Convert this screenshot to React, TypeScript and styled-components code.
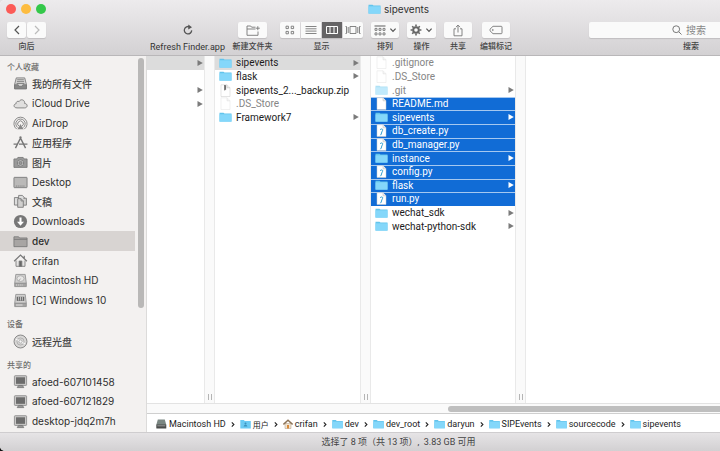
import React from "react";
import styled, { createGlobalStyle, css } from "styled-components";

const GlobalStyle = createGlobalStyle`
  * { box-sizing: border-box; }
  body {
    margin: 0;
    overflow: hidden;
    background: linear-gradient(#e4e2e4 50%, #111 50%);
    font-family: Inter, "Noto Sans CJK SC", sans-serif;
    color: #333;
  }
  button, input { font: inherit; color: inherit; margin: 0; padding: 0; border: 0; background: none; }
  svg { display: block; flex: none; }
`;

const compactFont = css`
  font-family: Roboto, "Noto Sans CJK SC", sans-serif;
`;

const Window = styled.div`
  display: flex;
  flex-direction: column;
  min-width: 797px;
  height: 100vh;
  overflow: hidden;
  border-radius: 5px;
  background: #fff;
`;

/* ---------- title and toolbar ---------- */

const Header = styled.header`
  position: relative;
  flex: none;
  height: 56px;
  border-bottom: 1px solid #b9b7b9;
  background: linear-gradient(#edebed, #d3d1d3);
`;

const Lights = styled.div`
  position: absolute;
  left: 6px;
  top: 4px;
  display: flex;
  gap: 5px;
`;

const Light = styled.button<{ $color: string }>`
  width: 10px;
  height: 10px;
  border-radius: 50%;
  background: ${(p) => p.$color};
`;

const Title = styled.h1`
  display: flex;
  align-items: center;
  justify-content: center;
  gap: 3px;
  height: 18px;
  margin: 0 0 4px;
  font-size: 10px;
  font-weight: 400;
`;

const Toolbar = styled.div`
  display: flex;
  padding: 0 4px 0 7px;
`;

const Tool = styled.div<{ $width: number; $before?: number; $grow?: boolean }>`
  display: flex;
  flex-direction: column;
  align-items: center;
  flex: ${(p) => (p.$grow ? 1 : 0)} 0 ${(p) => p.$width}px;
  min-width: 0;
  margin-left: ${(p) => p.$before ?? 0}px;
`;

const ToolLabel = styled.span<{ $latin?: boolean }>`
  ${compactFont}
  margin-top: 2px;
  line-height: 14px;
  font-size: ${(p) => (p.$latin ? 9 : 8)}px;
  font-weight: ${(p) => (p.$latin ? 400 : 500)};
  color: ${(p) => (p.$latin ? "#333" : "#444")};
  white-space: nowrap;
`;

const Controls = styled.div`
  display: flex;
  width: 100%;
  gap: 1px;
`;

const ToolButton = styled.button<{ $plain?: boolean; $active?: boolean }>`
  display: flex;
  align-items: center;
  justify-content: center;
  gap: 3px;
  flex: 1;
  min-width: 0;
  height: 16px;
  border-radius: 2px;
  color: #666;
  ${(p) =>
    !p.$plain &&
    css`
      background: ${p.$active ? "#666466" : "#fafafa"};
      color: ${p.$active ? "#fff" : "#666"};
      box-shadow: 0 1px 1px #c0bec0;
    `}
`;

const Segments = styled(Controls)`
  ${ToolButton} { border-radius: 0; }
  ${ToolButton}:first-child { border-radius: 2px 0 0 2px; }
  ${ToolButton}:last-child { border-radius: 0 2px 2px 0; }
`;

const SearchBox = styled.label`
  display: flex;
  align-items: center;
  justify-content: center;
  gap: 4px;
  width: 100%;
  height: 16px;
  border-radius: 2px;
  background: #fafafa;
  box-shadow: 0 1px 1px #c0bec0;
  color: #777;
`;

const SearchInput = styled.input`
  width: 24px;
  font-size: 10px;
  outline: 0;
  &::placeholder { color: #888; opacity: 1; }
`;

/* ---------- body ---------- */

const Body = styled.div`
  display: flex;
  flex: 1;
  min-height: 0;
`;

const Sidebar = styled.nav`
  display: flex;
  flex: none;
  width: 147px;
  overflow: hidden;
  border-right: 1px solid #dcdbda;
  background: #f3f1f0;
`;

const SidebarLists = styled.div`
  width: 135px;
`;

const SidebarThumb = styled.div`
  width: 6px;
  height: 250px;
  margin: 2px 0 0 3px;
  border-radius: 3px;
  background: #b9b8b7;
`;

const GroupTitle = styled.h2<{ $gap: number }>`
  margin: ${(p) => p.$gap}px 0 0 7px;
  font-size: 8px;
  line-height: 14px;
  font-weight: 500;
  color: #6e6d6c;
`;

const Places = styled.ul<{ $count: number; $height: number }>`
  display: grid;
  grid-template-rows: repeat(${(p) => p.$count}, 1fr);
  height: ${(p) => p.$height}px;
  margin: 0;
  padding: 0;
  list-style: none;
`;

const Place = styled.a<{ $active?: boolean }>`
  display: flex;
  align-items: center;
  gap: 4px;
  height: 100%;
  padding-left: 13px;
  font-size: 10px;
  font-weight: ${(p) => (p.$active ? 500 : 400)};
  color: #2e2e2e;
  text-decoration: none;
  white-space: nowrap;
  background: ${(p) => (p.$active ? "#d8d4d2" : "transparent")};
  &:lang(zh) { font-weight: 500; color: #444; }
`;

const Main = styled.main`
  display: flex;
  flex-direction: column;
  flex: 1;
  min-width: 0;
`;

const Columns = styled.div`
  display: flex;
  flex: 1;
  min-height: 0;
`;

const Column = styled.ul<{ $width: number }>`
  display: grid;
  grid-template-rows: repeat(13, 1fr);
  flex: none;
  width: ${(p) => p.$width}px;
  height: 177px;
  margin: 0;
  padding: 0;
  list-style: none;
`;

const Preview = styled.div`
  flex: 1;
`;

const Divider = styled.div`
  display: flex;
  align-items: flex-end;
  justify-content: center;
  gap: 2px;
  flex: none;
  width: 11px;
  padding-bottom: 3px;
  border: solid #e9e9e9;
  border-width: 0 1px;
  background: #fafafa;
`;

const Grip = styled.i`
  width: 1px;
  height: 6px;
  background: #b4b4b4;
`;

const FileRow = styled.button<{ $state?: string; $dim?: boolean }>`
  ${compactFont}
  display: flex;
  align-items: center;
  gap: 4px;
  width: 100%;
  height: 100%;
  padding: 0 1px 0 4px;
  font-size: 10px;
  line-height: 12px;
  text-align: left;
  white-space: nowrap;
  color: ${(p) => (p.$state === "selected" ? "#fff" : p.$dim ? "#858585" : "#1c1c1c")};
  background: ${(p) => (p.$state === "selected" ? "#116cd6" : p.$state === "open" ? "#dcdcdc" : "transparent")};
  ${(p) => p.$state === "selected" && "box-shadow: inset 0 1px #a5c8f0;"}
`;

const FileName = styled.span`
  flex: 1;
  padding-top: 1px;
`;

const ArrowTint = styled.span<{ $light?: boolean }>`
  color: ${(p) => (p.$light ? "#fff" : "#7b7b7b")};
`;

const Faded = styled.span<{ $on?: boolean }>`
  flex: none;
  opacity: ${(p) => (p.$on ? 0.5 : 1)};
`;

const ScrollTrack = styled.div`
  flex: none;
  height: 11px;
  padding: 2px 2px 0 301px;
  border: solid #e3e3e3;
  border-width: 1px 0;
  border-bottom-color: #cfcfcf;
  background: #fafafa;
`;

const ScrollThumb = styled.div`
  height: 6px;
  border-radius: 3px;
  background: #bfbfbf;
`;

const PathBar = styled.nav`
  ${compactFont}
  display: flex;
  align-items: center;
  flex: none;
  gap: 5px;
  height: 18px;
  padding: 2px 0 0 9px;
  font-size: 9px;
  white-space: nowrap;
`;

const Crumb = styled.a`
  display: flex;
  align-items: center;
  gap: 2px;
  color: #1c1c1c;
  text-decoration: none;
  &:lang(zh) { font-size: 8px; }
`;

const StatusBar = styled.footer`
  ${compactFont}
  flex: none;
  height: 19px;
  border-top: 1px solid #cfcdcf;
  background: linear-gradient(#e6e4e6, #d2d0d2);
  font-size: 9px;
  line-height: 18px;
  text-align: center;
  color: #444;
`;

/* ---------- drawings ---------- */

const FolderIcon = () => (
  <svg width="13" height="12" viewBox="0 0 13 12">
    <path d="M.5 1.7h4l1 .9h7v8H.5z" fill="#62c4ec" />
    <path d="M.5 3.3h12v7.4H.5z" fill="#84d7fa" />
  </svg>
);

const PageIcon = ({ kind }: { kind: string }) => (
  <svg width="13" height="13" viewBox="0 0 13 13">
    <path d="M2 .8h6l3 3v8.7H2z" fill="#fff" stroke="#c9c9c9" strokeWidth=".5" />
    <path d="M8 .8v3h3" fill="#eee" stroke="#bbb" strokeWidth=".5" />
    {kind === "zip" && <path d="M5.7 1v5.4M6.6 1.2v4.6" stroke="#555" strokeWidth=".9" />}
    {kind === "py" && (
      <path d="M5 5.8c1.8-1.6 3.6-.8 2.2 1.4-.8 1-.4 2.6-1.8 4" fill="none" stroke="#269bd0" strokeWidth="1" />
    )}
  </svg>
);

const FileArrow = () => (
  <svg width="6" height="8" viewBox="0 0 6 8">
    <path d="M.5 1 5.8 4 .5 7z" fill="currentColor" />
  </svg>
);

const CrumbArrow = () => (
  <svg width="4" height="7" viewBox="0 0 4 7">
    <path d="m.8 1.4 2.1 2.1L.8 5.6" fill="none" stroke="#222" strokeWidth="1.1" />
  </svg>
);

const DiskIcon = () => (
  <svg width="11" height="10" viewBox="0 0 11 10">
    <path d="M1.8.5h7L10.3 6H.3z" fill="#7b8783" />
    <rect x=".3" y="5.5" width="10" height="4" rx=".5" fill="#4a4c4b" />
    <path d="M1.3 6.8h8" stroke="#bbb" strokeWidth=".7" />
  </svg>
);

const UsersIcon = () => (
  <svg width="11" height="10" viewBox="0 0 11 10">
    <path d="M.3 1h3.5l1 1h6v7.5H.3z" fill="#6bcaf3" />
    <circle cx="5.5" cy="4.4" r="1" fill="#3c93bd" />
    <path d="M3.7 7.6c.2-2.4 3.4-2.4 3.6 0z" fill="#3c93bd" />
  </svg>
);

const CrumbFolder = () => (
  <svg width="11" height="10" viewBox="0 0 11 10">
    <path d="M.3 1h3.5l1 1h6v7.3H.3z" fill="#62c4ec" />
    <path d="M.3 2.6h10.5v6.7H.3z" fill="#84d7fa" />
  </svg>
);

const CrumbHome = () => (
  <svg width="10" height="10" viewBox="0 0 10 10">
    <path d="M2 4.5h6v5H2z" fill="#f0e3cf" stroke="#b09a80" strokeWidth=".5" />
    <path d="M.4 5.4 5 1.2l4.6 4.2" fill="none" stroke="#8c7357" strokeWidth="1.4" />
    <path d="M4 6h2v3.5H4z" fill="#d98a3a" />
  </svg>
);

const placeDrawings: Record<string, React.ReactNode> = {
  tray: (
    <>
      <path d="M3.5 2h9l1.8 7v4.5H1.7V9z" fill="#d6d5d4" />
      <path d="M4.5 4h7M4.2 6h7.6M3.8 8h8.4" />
      <path d="M1.7 9.3h3.8l1 1.7h3l1-1.7h3.8v4.4H1.7z" fill="#888" />
    </>
  ),
  cloud: <path d="M4.3 12.7C.3 12.7.2 8.6 3.3 8.2c-.2-2.4 2-3.2 3.2-2.2 1.7-3.6 6.6-1.8 5.9 2 3.7.1 3.5 4.7 0 4.7z" fill="#e0dfde" />,
  airdrop: (
    <>
      <path d="M4 14A7 7 0 1 1 12 14M5.2 12.4a5 5 0 1 1 5.6 0M6.3 10.8a3 3 0 1 1 3.4 0" fill="none" />
      <path d="M8 8.6 11.2 14H4.8z" fill="#888" stroke="none" />
    </>
  ),
  apps: (
    <>
      <path d="M8.8 1.8 2.6 14M7.2 1.8 13.4 14" fill="none" strokeWidth="1.5" />
      <path d="M.6 9.8h4.2m1.6 0h9" fill="none" strokeWidth="1.4" />
    </>
  ),
  camera: (
    <>
      <path d="M1 4.2h3.2l1-1.6h5.6l1 1.6H15v9H1z" fill="#999" />
      <circle cx="8" cy="8.5" r="3.4" fill="#ccc" />
      <circle cx="8" cy="8.5" r="1.7" fill="#999" />
    </>
  ),
  desktop: (
    <>
      <rect x="1" y="2.5" width="14" height="11" rx=".6" fill="#bab9b8" />
      <path d="M3 11.8h10" strokeDasharray="1.2 .8" />
    </>
  ),
  docs: (
    <>
      <path d="M1.5 3.8h5v8h-5z" fill="#ddd" />
      <path d="M6 1.5h4L12.2 4v6H6z" fill="#ddd" />
      <path d="M5 5h3.6l2.4 2.4v6.8H5zM8.6 5v2.4H11M11 4.5h3.3v7.4H11" fill="#d0cfce" />
    </>
  ),
  download: (
    <>
      <circle cx="8" cy="8" r="7" fill="#777" stroke="none" />
      <path d="M8 3.8v6" stroke="#fff" strokeWidth="2.2" />
      <path d="M4.3 8.3h7.4L8 12.4z" fill="#fff" stroke="none" />
    </>
  ),
  folder: (
    <>
      <path d="M1 3h5l1 1.2h8v9.3H1z" fill="#a8a5a3" />
      <path d="M1 5.7h14" />
    </>
  ),
  home: (
    <>
      <path d="M3.2 8v6.2h9.6V8" fill="#e5e4e3" />
      <path d="M1.2 8.8 8 2.2l6.8 6.6M12 6V2.8" fill="none" strokeWidth="1.3" />
      <path d="M6.6 8.6h2.8v5.6H6.6z" fill="#666" />
    </>
  ),
  disk: (
    <>
      <path d="M3 1.5h10l1.2 9.5H1.8z" fill="#d0cfce" stroke="#8f8f8f" />
      <ellipse cx="8" cy="6" rx="3.8" ry="3.1" fill="#e8e7e6" stroke="#aaa" />
      <path d="M8 6 6 8.6" stroke="#999" />
      <path d="M1.8 11h12.4v3.5H1.8z" fill="#a5a4a3" stroke="#8f8f8f" />
      <path d="M3.2 12.8h7" strokeDasharray="1 1" stroke="#eee" />
    </>
  ),
  windows: (
    <>
      <path d="M3 1.5h10l1.2 9.5H1.8z" fill="#d0cfce" stroke="#8f8f8f" />
      <path d="M4 4h8v4.4H4z" fill="#666" stroke="none" />
      <path d="M6 4v4m2-4v4m2-4v4" stroke="#ddd" strokeWidth=".8" />
      <path d="M1.8 11h12.4v3.5H1.8z" fill="#a5a4a3" stroke="#8f8f8f" />
      <path d="M3.2 12.8h7" stroke="#eee" />
    </>
  ),
  disc: (
    <>
      <circle cx="8" cy="8" r="6.9" fill="#d8d7d6" />
      <circle cx="8" cy="8" r="3.8" fill="none" stroke="#aaa" />
      <circle cx="8" cy="8" r="1.7" fill="#f5f5f5" stroke="#aaa" />
      <path d="M3 5.5 6.5 7M9.5 9l3.5 1.5" stroke="#fff" />
    </>
  ),
  computer: (
    <>
      <rect x="1.5" y="1.8" width="13" height="10.4" rx=".8" fill="#c9c8c7" stroke="#8a8a8a" />
      <path d="M3.2 3.5h9.6v7H3.2z" fill="#6c6c6c" stroke="none" />
      <path d="M6 12.2h4l1.5 2.3h-7z" fill="#999" />
    </>
  ),
};

const PlaceIcon = ({ name }: { name: string }) => (
  <svg width="15" height="15" viewBox="0 0 16 16" stroke="#777" strokeWidth=".9">
    {placeDrawings[name]}
  </svg>
);

const Chevron = ({ dir, color = "#555" }: { dir: "left" | "right" | "down"; color?: string }) => (
  <svg width="8" height="10" viewBox="0 0 8 10" fill="none" stroke={color} strokeWidth="1.2">
    <path d={{ left: "M6 1 2 5l4 4", right: "m2 1 4 4-4 4", down: "m1.4 3.6 2.6 2.8 2.6-2.8" }[dir]} />
  </svg>
);

const RefreshIcon = () => (
  <svg width="10" height="12" viewBox="0 0 10 12">
    <path d="M8.7 6.4a3.7 3.7 0 1 1-2.1-3.5" fill="none" stroke="#555" strokeWidth="1.3" />
    <path d="M5.3.4 9 3.2 5.2 5.4z" fill="#555" />
  </svg>
);

const NewFolderIcon = () => (
  <svg width="14" height="11" viewBox="0 0 14 11" fill="none" stroke="#777" strokeWidth=".9">
    <path d="M12 6.5v3.8H1V1h3.7l.9 1.2h3.9M1 4h8.5M11.8 1.2v4M9.8 3.2h4" />
  </svg>
);

const GridIcon = () => (
  <svg width="10" height="10" viewBox="0 0 10 10" fill="none" stroke="#777" strokeWidth=".9">
    <path d="M1 1.2h2.4v2.4H1zM6.2 1.2h2.4v2.4H6.2zM1 6.4h2.4v2.4H1zM6.2 6.4h2.4v2.4H6.2z" />
  </svg>
);

const ListIcon = () => (
  <svg width="12" height="10" viewBox="0 0 12 10">
    <path d="M.5 1.5h11m-11 2.3h11m-11 2.3h11m-11 2.4h11" stroke="#777" strokeWidth=".9" />
  </svg>
);

const ColumnsIcon = () => (
  <svg width="14" height="10" viewBox="0 0 14 10" fill="none" stroke="#fff">
    <path d="M1.5 1.5h11v7h-11zM5 1.5v7M9 1.5v7" />
  </svg>
);

const FlowIcon = () => (
  <svg width="16" height="10" viewBox="0 0 16 10" fill="none" stroke="#777" strokeWidth=".9">
    <path d="M5 1.5h6v7H5zM3.2 2v6M12.8 2v6M.5 1.5h1v7h-1M15.5 1.5h-1v7h1" />
  </svg>
);

const ArrangeIcon = () => (
  <svg width="12" height="11" viewBox="0 0 12 11" fill="none" stroke="#777" strokeWidth=".9">
    <path d="M.5 1h11" strokeWidth="1.2" />
    <path d="M1 3.4h2v2H1zM5 3.4h2v2H5zM9 3.4h2v2H9zM1 7.9h2v2H1zM5 7.9h2v2H5zM9 7.9h2v2H9z" />
  </svg>
);

const GearIcon = () => (
  <svg width="12" height="12" viewBox="0 0 12 12" fill="none" stroke="#666">
    <circle cx="6" cy="6" r="2.8" strokeWidth="2" />
    <path d="M6 .6v2M6 9.4v2M.6 6h2M9.4 6h2M2.2 2.2l1.3 1.3M8.5 8.5l1.3 1.3M9.8 2.2 8.5 3.5M3.5 8.5 2.2 9.8" strokeWidth="1.6" />
  </svg>
);

const ShareIcon = () => (
  <svg width="10" height="13" viewBox="0 0 10 13" fill="none" stroke="#777" strokeWidth=".9">
    <path d="M3 4.8H1v7h8v-7H7M5 8.5V1.2M2.9 3.2 5 1.1l2.1 2.1" />
  </svg>
);

const TagIcon = () => (
  <svg width="14" height="10" viewBox="0 0 14 10" fill="none" stroke="#777" strokeWidth=".9">
    <path d="M4 1.3h8.2q.8 0 .8.8v5.8q0 .8-.8.8H4L1 5.8V4.2z" />
    <circle cx="3.8" cy="5" r=".5" />
  </svg>
);

const SearchIcon = () => (
  <svg width="10" height="10" viewBox="0 0 10 10" fill="none" stroke="#777">
    <circle cx="4.2" cy="4.2" r="3.4" />
    <path d="m6.7 6.7 2.8 2.8" />
  </svg>
);

/* ---------- data ---------- */

type Entry = { name: string; icon: "folder" | "page" | "zip" | "py"; state?: "open" | "selected"; dim?: boolean };

const favourites = [
  ["tray", "我的所有文件", "zh"],
  ["cloud", "iCloud Drive"],
  ["airdrop", "AirDrop"],
  ["apps", "应用程序", "zh"],
  ["camera", "图片", "zh"],
  ["desktop", "Desktop"],
  ["docs", "文稿", "zh"],
  ["download", "Downloads"],
  ["folder", "dev"],
  ["home", "crifan"],
  ["disk", "Macintosh HD"],
  ["windows", "[C] Windows 10"],
];
const devices = [["disc", "远程光盘", "zh"]];
const shared = [
  ["computer", "afoed-607101458"],
  ["computer", "afoed-607121829"],
  ["computer", "desktop-jdq2m7h"],
];

const projects: Entry[] = [
  { name: "sipevents", icon: "folder", state: "open" },
  { name: "flask", icon: "folder" },
  { name: "sipevents_2..._backup.zip", icon: "zip" },
  { name: ".DS_Store", icon: "page", dim: true },
  { name: "Framework7", icon: "folder" },
];

const files: Entry[] = [
  { name: ".gitignore", icon: "page", dim: true },
  { name: ".DS_Store", icon: "page", dim: true },
  { name: ".git", icon: "folder", dim: true },
  { name: "README.md", icon: "page", state: "selected" },
  { name: "sipevents", icon: "folder", state: "selected" },
  { name: "db_create.py", icon: "py", state: "selected" },
  { name: "db_manager.py", icon: "py", state: "selected" },
  { name: "instance", icon: "folder", state: "selected" },
  { name: "config.py", icon: "py", state: "selected" },
  { name: "flask", icon: "folder", state: "selected" },
  { name: "run.py", icon: "py", state: "selected" },
  { name: "wechat_sdk", icon: "folder" },
  { name: "wechat-python-sdk", icon: "folder" },
];

const crumbs = ["Macintosh HD", "用户", "crifan", "dev", "dev_root", "daryun", "SIPEvents", "sourcecode", "sipevents"];
const crumbIcons: Record<string, React.ReactNode> = {
  "Macintosh HD": <DiskIcon />,
  用户: <UsersIcon />,
  crifan: <CrumbHome />,
};

/* ---------- parts ---------- */

const PlaceList = ({ places, height }: { places: string[][]; height: number }) => (
  <Places $count={places.length} $height={height}>
    {places.map(([icon, name, lang]) => (
      <li key={name}>
        <Place href="#" lang={lang} $active={name === "dev"}>
          <PlaceIcon name={icon} />
          {name}
        </Place>
      </li>
    ))}
  </Places>
);

const FileColumn = ({ entries, width }: { entries: Entry[]; width: number }) => (
  <Column $width={width}>
    {entries.map((e) => (
      <li key={e.name}>
        <FileRow $state={e.state} $dim={e.dim}>
          <Faded $on={e.dim}>{e.icon === "folder" ? <FolderIcon /> : <PageIcon kind={e.icon} />}</Faded>
          <FileName>{e.name}</FileName>
          {e.icon === "folder" && <ArrowTint $light={e.state === "selected"}><FileArrow /></ArrowTint>}
        </FileRow>
      </li>
    ))}
  </Column>
);

const ColumnDivider = () => (
  <Divider>
    <Grip />
    <Grip />
  </Divider>
);

export default function App() {
  return (
    <>
      <GlobalStyle />
      <Window>
        <Header>
          <Lights>
            <Light $color="#fc5b57" aria-label="关闭" />
            <Light $color="#fdbc40" aria-label="最小化" />
            <Light $color="#34c84a" aria-label="缩放" />
          </Lights>
          <Title>
            <FolderIcon />
            sipevents
          </Title>
          <Toolbar>
            <Tool $width={39}>
              <Controls>
                <ToolButton aria-label="后退"><Chevron dir="left" /></ToolButton>
                <ToolButton aria-label="前进"><Chevron dir="right" color="#bbb" /></ToolButton>
              </Controls>
              <ToolLabel>向后</ToolLabel>
            </Tool>
            <Tool $width={75} $before={104}>
              <Controls>
                <ToolButton $plain aria-label="Refresh"><RefreshIcon /></ToolButton>
              </Controls>
              <ToolLabel $latin>Refresh Finder.app</ToolLabel>
            </Tool>
            <Tool $width={29} $before={13}>
              <Controls>
                <ToolButton aria-label="新建文件夹"><NewFolderIcon /></ToolButton>
              </Controls>
              <ToolLabel>新建文件夹</ToolLabel>
            </Tool>
            <Tool $width={83} $before={13}>
              <Segments>
                <ToolButton aria-label="图标"><GridIcon /></ToolButton>
                <ToolButton aria-label="列表"><ListIcon /></ToolButton>
                <ToolButton $active aria-label="分栏"><ColumnsIcon /></ToolButton>
                <ToolButton aria-label="Cover Flow"><FlowIcon /></ToolButton>
              </Segments>
              <ToolLabel>显示</ToolLabel>
            </Tool>
            <Tool $width={28} $before={8}>
              <Controls>
                <ToolButton aria-label="排列" aria-haspopup="menu"><ArrangeIcon /><Chevron dir="down" /></ToolButton>
              </Controls>
              <ToolLabel>排列</ToolLabel>
            </Tool>
            <Tool $width={29} $before={8}>
              <Controls>
                <ToolButton aria-label="操作" aria-haspopup="menu"><GearIcon /><Chevron dir="down" /></ToolButton>
              </Controls>
              <ToolLabel>操作</ToolLabel>
            </Tool>
            <Tool $width={28} $before={8}>
              <Controls>
                <ToolButton aria-label="共享"><ShareIcon /></ToolButton>
              </Controls>
              <ToolLabel>共享</ToolLabel>
            </Tool>
            <Tool $width={28} $before={10}>
              <Controls>
                <ToolButton aria-label="编辑标记"><TagIcon /></ToolButton>
              </Controls>
              <ToolLabel>编辑标记</ToolLabel>
            </Tool>
            <Tool $width={204} $before={79} $grow>
              <SearchBox>
                <SearchIcon />
                <SearchInput type="text" placeholder="搜索" aria-label="搜索" />
              </SearchBox>
              <ToolLabel>搜索</ToolLabel>
            </Tool>
          </Toolbar>
        </Header>

        <Body>
          <Sidebar>
            <SidebarLists>
              <GroupTitle $gap={4}>个人收藏</GroupTitle>
              <PlaceList places={favourites} height={236} />
              <GroupTitle $gap={7}>设备</GroupTitle>
              <PlaceList places={devices} height={20} />
              <GroupTitle $gap={7}>共享的</GroupTitle>
              <PlaceList places={shared} height={59} />
            </SidebarLists>
            <SidebarThumb />
          </Sidebar>

          <Main>
            <Columns>
              <Column $width={57}>
                {["open", "", "arrow", "arrow"].map((state, i) => (
                  <li key={i}>
                    <FileRow $state={state} aria-label="文件夹">
                      <FileName />
                      {state && <ArrowTint><FileArrow /></ArrowTint>}
                    </FileRow>
                  </li>
                ))}
              </Column>
              <ColumnDivider />
              <FileColumn entries={projects} width={145} />
              <ColumnDivider />
              <FileColumn entries={files} width={144} />
              <ColumnDivider />
              <Preview />
            </Columns>
            <ScrollTrack>
              <ScrollThumb />
            </ScrollTrack>
            <PathBar>
              {crumbs.map((name, i) => (
                <React.Fragment key={name}>
                  {i > 0 && <CrumbArrow />}
                  <Crumb href="#" lang={name === "用户" ? "zh" : undefined}>
                    {crumbIcons[name] ?? <CrumbFolder />}
                    {name}
                  </Crumb>
                </React.Fragment>
              ))}
            </PathBar>
          </Main>
        </Body>
        <StatusBar>选择了 8 项（共 13 项）,&nbsp; 3.83 GB 可用</StatusBar>
      </Window>
    </>
  );
}
